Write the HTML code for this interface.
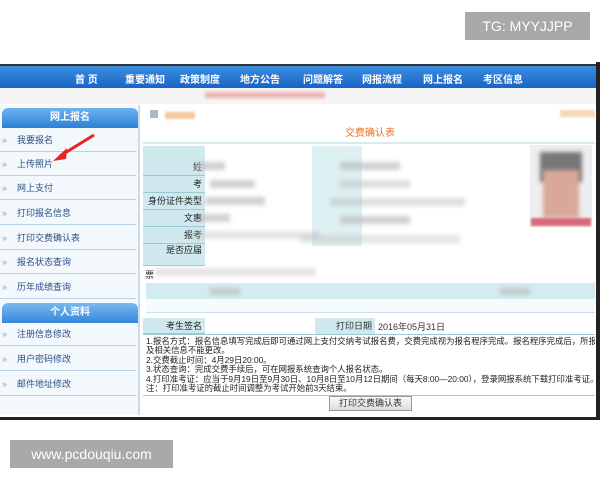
<!DOCTYPE html>
<html><head><meta charset="utf-8"><style>
*{margin:0;padding:0;box-sizing:border-box}
body{width:600px;height:480px;background:#fff;position:relative;overflow:hidden;font-family:"Liberation Sans","Noto Sans CJK SC",sans-serif;font-size:9px;color:#333}
.abs{position:absolute}
.nav{left:0;top:64px;width:596px;height:24px;background:linear-gradient(#3a8ee0,#1a63c4);border-top:2px solid #333}
.nav span{position:absolute;top:5px;color:#fff;font-size:10px;font-weight:bold}
.side{left:0;top:105px;width:140px;height:310px;background:#f3f8fc;border-right:2px solid #c6dcef}
.hd{position:absolute;left:2px;width:136px;height:20px;background:linear-gradient(#6fb3ef,#2c7fd6);border-radius:6px 6px 0 0;color:#fff;font-weight:bold;font-size:10px;text-align:center;line-height:20px}
.it{position:absolute;left:0;width:136px;height:24px;border-bottom:1px solid #b8d0e6;line-height:24px;color:#2a4f85;font-size:9px}
.it b{color:#7fa3c8;margin:0 10px 0 2px;font-weight:normal}
.lbl{position:absolute;left:143px;width:62px;background:#cfe9ee;border-bottom:1px solid #9cc8d2;text-align:right;padding-right:3px;font-size:9px;color:#222}
.blur{position:absolute;background:#bdbdbd;filter:blur(2px);opacity:.7}
</style></head><body>
<div class="abs" style="left:465px;top:12px;width:125px;height:28px;background:#a9a9a9;color:#fff;font-size:14px;line-height:28px;text-align:center">TG: MYYJJPP</div>
<div class="abs" style="left:0;top:62px;width:600px;height:358px;background:#fff;border-right:4px solid #222;border-bottom:3px solid #222"></div>
<div class="abs nav">
<span style="left:75px">首 页</span><span style="left:125px">重要通知</span><span style="left:180px">政策制度</span><span style="left:240px">地方公告</span><span style="left:303px">问题解答</span><span style="left:362px">网报流程</span><span style="left:423px">网上报名</span><span style="left:483px">考区信息</span>
</div>
<div class="abs" style="left:0;top:88px;width:596px;height:16px;background:#f4f4f4"></div>
<div class="abs" style="left:205px;top:92px;width:120px;height:6px;background:#f0b0b0;filter:blur(1.5px)"></div>
<div class="abs side">
<div class="hd" style="top:3px">网上报名</div>
<div class="it" style="top:23px"><b>»</b>我要报名</div>
<div class="it" style="top:47px"><b>»</b>上传照片</div>
<div class="it" style="top:71px"><b>»</b>网上支付</div>
<div class="it" style="top:96px"><b>»</b>打印报名信息</div>
<div class="it" style="top:121px"><b>»</b>打印交费确认表</div>
<div class="it" style="top:145px"><b>»</b>报名状态查询</div>
<div class="it" style="top:170px"><b>»</b>历年成绩查询</div>
<div class="hd" style="top:198px;background:linear-gradient(#7ab9ef,#3586da)">个人资料</div>
<div class="it" style="top:217px"><b>»</b>注册信息修改</div>
<div class="it" style="top:242px"><b>»</b>用户密码修改</div>
<div class="it" style="top:267px"><b>»</b>邮件地址修改</div>
</div>
<svg class="abs" style="left:50px;top:132px" width="50" height="32"><path d="M44 3 L10 24" stroke="#e8231f" stroke-width="3"/><path d="M3 29 L17 16 L16 27 Z" fill="#e8231f"/></svg>
<div class="abs" style="left:150px;top:110px;width:8px;height:8px;background:#a9b9c9"></div>
<div class="abs" style="left:165px;top:112px;width:30px;height:7px;background:#f5c8a0;filter:blur(1px)"></div>
<div class="abs" style="left:560px;top:110px;width:35px;height:7px;background:#f5d8b8;filter:blur(1px)"></div>
<div class="abs" style="left:345px;top:124px;color:#e8702a;font-size:10px">交费确认表</div>
<div class="abs" style="left:143px;top:142px;width:452px;height:2px;background:#d6eaf0"></div>
<div class="lbl" style="top:158px;height:18px;line-height:18px">姓</div>
<div class="lbl" style="top:176px;height:17px;line-height:17px">考</div>
<div class="lbl" style="top:193px;height:17px;line-height:17px">身份证件类型</div>
<div class="lbl" style="top:210px;height:17px;line-height:17px">文惠</div>
<div class="lbl" style="top:227px;height:17px;line-height:17px">报考</div>
<div class="lbl" style="top:244px;height:22px;line-height:12px">是否应届</div>
<div class="abs" style="left:143px;top:146px;width:62px;height:12px;background:#cfe9ee"></div>
<div class="abs" style="left:312px;top:146px;width:50px;height:100px;background:#d4ecef;opacity:.8"></div>
<div class="blur" style="left:195px;top:162px;width:30px;height:8px"></div>
<div class="blur" style="left:210px;top:180px;width:45px;height:8px"></div>
<div class="blur" style="left:205px;top:197px;width:60px;height:8px"></div>
<div class="blur" style="left:200px;top:214px;width:30px;height:8px"></div>
<div class="blur" style="left:190px;top:231px;width:130px;height:8px;opacity:.4"></div>
<div class="blur" style="left:340px;top:162px;width:60px;height:8px"></div>
<div class="blur" style="left:340px;top:180px;width:70px;height:8px;opacity:.5"></div>
<div class="blur" style="left:330px;top:198px;width:135px;height:8px;opacity:.5"></div>
<div class="blur" style="left:340px;top:216px;width:70px;height:8px"></div>
<div class="blur" style="left:300px;top:235px;width:160px;height:8px;opacity:.4"></div>
<div class="abs" style="left:530px;top:145px;width:62px;height:82px;background:#eee"></div>
<div class="abs" style="left:540px;top:152px;width:42px;height:30px;background:#777;filter:blur(2px)"></div>
<div class="abs" style="left:543px;top:170px;width:36px;height:48px;background:#d9a898;filter:blur(2px)"></div>
<div class="abs" style="left:531px;top:218px;width:60px;height:8px;background:#d86a7a;filter:blur(1px)"></div>
<div class="abs" style="left:145px;top:268px;font-size:9px">票</div>
<div class="blur" style="left:155px;top:268px;width:160px;height:8px;opacity:.4"></div>
<div class="abs" style="left:146px;top:283px;width:449px;height:16px;background:#d2ecf0"></div>
<div class="abs" style="left:146px;top:299px;width:449px;height:14px;background:#f6fbfc;border-bottom:1px solid #cde"></div>
<div class="blur" style="left:210px;top:288px;width:30px;height:7px"></div>
<div class="blur" style="left:500px;top:288px;width:30px;height:7px"></div>
<div class="lbl" style="top:318px;height:16px;line-height:16px">考生签名</div>
<div class="abs" style="left:315px;top:318px;width:60px;height:16px;background:#cfe9ee;text-align:right;line-height:16px;padding-right:3px">打印日期</div>
<div class="abs" style="left:378px;top:320px;font-size:9px">2016年05月31日</div>
<div class="abs" style="left:143px;top:334px;width:452px;height:62px;border-top:1px solid #9cc8d2;border-bottom:1px solid #9cc8d2;padding:2px 3px;font-size:8.4px;line-height:9.4px;color:#222;white-space:nowrap;overflow:hidden">
1.报名方式：报名信息填写完成后即可通过网上支付交纳考试报名费，交费完成视为报名程序完成。报名程序完成后，所报考科目<br>及相关信息不能更改。<br>2.交费截止时间：4月29日20:00。<br>3.状态查询：完成交费手续后，可在网报系统查询个人报名状态。<br>4.打印准考证：应当于9月19日至9月30日、10月8日至10月12日期间（每天8:00—20:00），登录网报系统下载打印准考证。<br>注：打印准考证的截止时间调整为考试开始前3天结束。</div>
<div class="abs" style="left:329px;top:396px;width:83px;height:15px;background:linear-gradient(#fafafa,#ddd);border:1px solid #999;text-align:center;line-height:13px;font-size:9px">打印交费确认表</div>
<div class="abs" style="left:10px;top:440px;width:163px;height:28px;background:#a9a9a9;color:#fff;font-size:14px;line-height:28px;text-align:center">www.pcdouqiu.com</div>
</body></html>
